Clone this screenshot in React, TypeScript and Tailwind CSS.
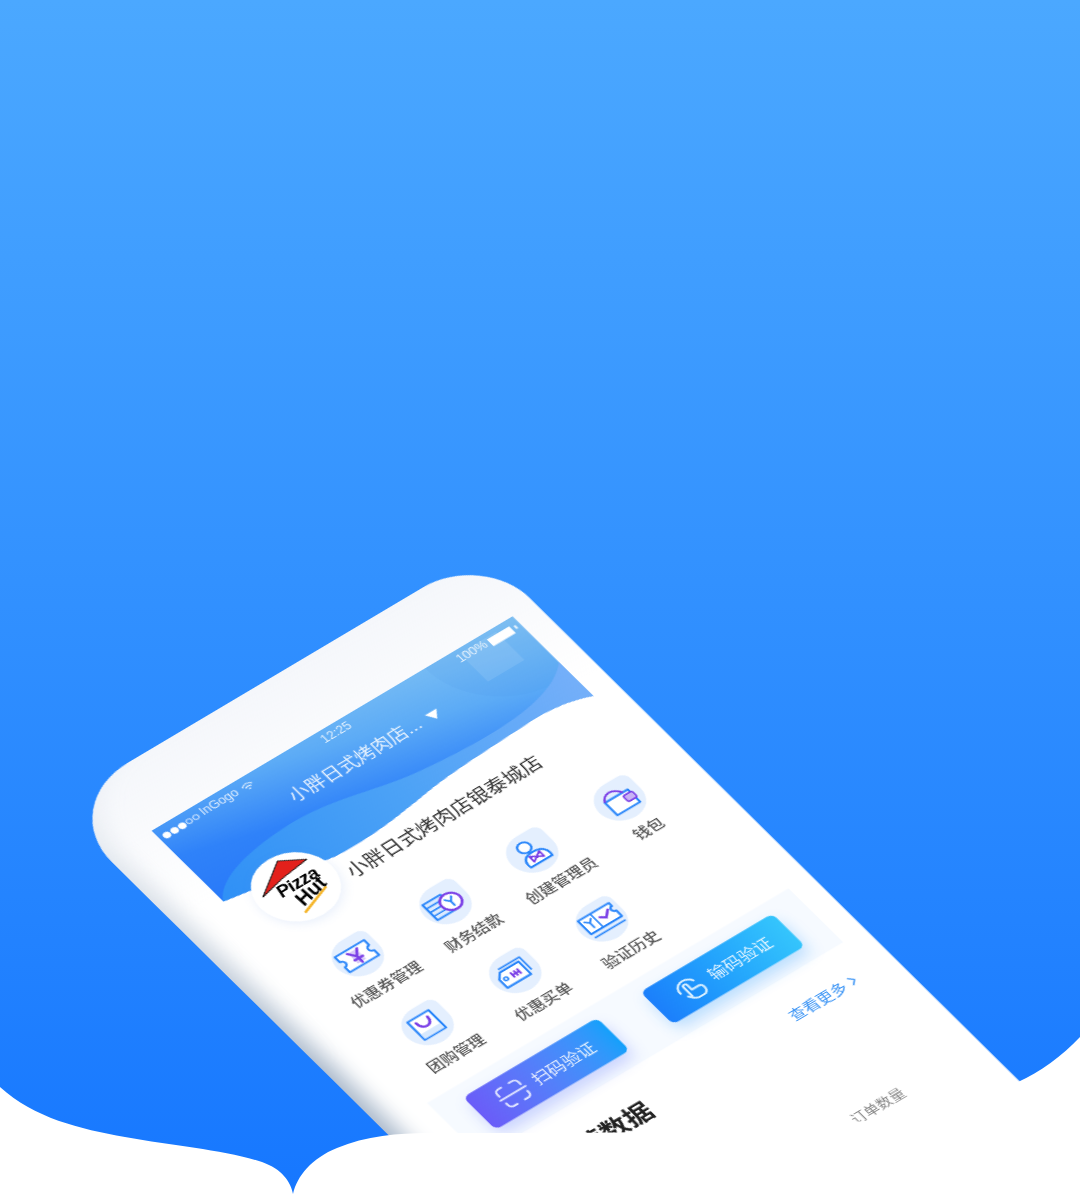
import React from 'react';
import { ChevronRight } from 'lucide-react';

const BLUE = '#2a86fa';
const PURPLE = '#7a3fe6';

const TicketIcon = () => (
  <svg width="42" height="32" viewBox="0 0 42 32" fill="none">
    <path d="M3 4h36v8a4 4 0 0 0 0 8v8H3v-8a4 4 0 0 0 0-8z" fill="#fff" stroke={BLUE} strokeWidth="2.4" strokeLinejoin="round" />
    <path d="M16 8h10v16H16z" fill="#d9ccf8" />
    <path d="M15 8l6 8 6-8M21 16v9M16 19h10" stroke={PURPLE} strokeWidth="2.8" strokeLinecap="round" />
  </svg>
);

const CoinsIcon = () => (
  <svg width="42" height="34" viewBox="0 0 42 34" fill="none">
    <path d="M3 5h22v24H3z" fill="#dbeafe" stroke={BLUE} strokeWidth="2.4" strokeLinejoin="round" />
    <path d="M3 11h22M3 17h22M3 23h22" stroke={BLUE} strokeWidth="1.8" />
    <circle cx="28" cy="18" r="11" fill="#fff" stroke={PURPLE} strokeWidth="2.6" />
    <path d="M24 13l4 5 4-5M28 18v6" stroke={BLUE} strokeWidth="2.2" strokeLinecap="round" />
  </svg>
);

const AdminIcon = () => (
  <svg width="36" height="36" viewBox="0 0 36 36" fill="none">
    <circle cx="15" cy="9" r="7" stroke={BLUE} strokeWidth="2.4" fill="#fff" />
    <path d="M5 33c-2-10 3-15 13-15s15 5 13 15z" fill="#fff" stroke={BLUE} strokeWidth="2.4" strokeLinejoin="round" />
    <path d="M12 21l6 4 6-4v8l-6-4-6 4z" stroke={PURPLE} strokeWidth="2" strokeLinejoin="round" />
  </svg>
);

const WalletIcon = () => (
  <svg width="36" height="34" viewBox="0 0 36 34" fill="none">
    <path d="M4 11h28v20H4z" fill="#fff" stroke={BLUE} strokeWidth="2.4" strokeLinejoin="round" />
    <path d="M4 11C7 5 11 3 15 3c4 0 8 3 11 8" stroke={PURPLE} strokeWidth="2.4" />
    <rect x="23" y="15" width="11" height="9" rx="2" fill="#c9b2f5" stroke={PURPLE} strokeWidth="1.8" />
  </svg>
);

const BagIcon = () => (
  <svg width="36" height="36" viewBox="0 0 36 36" fill="none">
    <path d="M5 4h26v28H5z" fill="#fff" stroke={BLUE} strokeWidth="2.4" strokeLinejoin="round" />
    <path d="M6 24h24v7H6z" fill="#d6e8fe" />
    <path d="M11 10c0 12 14 12 14 0" stroke={PURPLE} strokeWidth="3" strokeLinecap="round" />
  </svg>
);

const TagIcon = () => (
  <svg width="40" height="34" viewBox="0 0 40 34" fill="none">
    <path d="M10 4h26v20" stroke={BLUE} strokeWidth="1.8" />
    <path d="M9 8L3 15v13h29V8z" fill="#fff" stroke={BLUE} strokeWidth="2.4" strokeLinejoin="round" />
    <circle cx="9" cy="18" r="2.200" stroke={BLUE} strokeWidth="1.8" />
    <path d="M17 14v8M21 14v8M25 14v8M16 18h10" stroke={PURPLE} strokeWidth="2.2" />
  </svg>
);

const CheckTicketIcon = () => (
  <svg width="44" height="36" viewBox="0 0 44 36" fill="none">
    <path d="M3 4h38v5a3 3 0 0 0 0 7v9H3z" fill="#fff" stroke={BLUE} strokeWidth="2.4" strokeLinejoin="round" />
    <path d="M18 4v21" stroke={BLUE} strokeWidth="1.8" />
    <path d="M7 9l4 4 4-4M11 13v7" stroke={BLUE} strokeWidth="2" strokeLinecap="round" />
    <path d="M23 13l5 4 7-7" stroke={PURPLE} strokeWidth="2.8" strokeLinecap="round" />
    <path d="M3 31h38" stroke={BLUE} strokeWidth="1.8" />
  </svg>
);

const ScanIcon = () => (
  <svg width="30" height="30" viewBox="0 0 30 30" fill="none" stroke="#dfe4ff" strokeWidth="2" strokeLinecap="round">
    <path d="M4 11V8a4 4 0 0 1 4-4h3M19 4h3a4 4 0 0 1 4 4v3M26 20v2a4 4 0 0 1-4 4h-3M11 26H8a4 4 0 0 1-4-4v-2M2 15h26" />
  </svg>
);

const TapIcon = () => (
  <svg width="30" height="30" viewBox="0 0 30 30" fill="none" stroke="#d8efff" strokeWidth="2" strokeLinecap="round" strokeLinejoin="round">
    <path d="M6 15a9 9 0 0 1 17-5" />
    <path d="M12 23V11a2 2 0 0 1 4 0v6h7a3 3 0 0 1 3 3v2a5 5 0 0 1-5 5h-5c-2 0-3-1-4-2l-3-4" />
  </svg>
);

const entries = [
  { label: '优惠券管理', icon: <TicketIcon /> },
  { label: '财务结款', icon: <CoinsIcon /> },
  { label: '创建管理员', icon: <AdminIcon /> },
  { label: '钱包', icon: <WalletIcon /> },
  { label: '团购管理', icon: <BagIcon /> },
  { label: '优惠买单', icon: <TagIcon /> },
  { label: '验证历史', icon: <CheckTicketIcon /> },
];

const HeaderArt = () => (
  <svg className="absolute left-0 top-0" width="375" height="116" viewBox="0 0 375 116" fill="none">
    <defs>
      <linearGradient id="headBase" x1="0" y1="1" x2="1" y2="0">
        <stop offset="0" stopColor="#2676f9" />
        <stop offset="0.35" stopColor="#2f82f9" />
        <stop offset="0.65" stopColor="#5cabf6" />
        <stop offset="1" stopColor="#82c3f3" />
      </linearGradient>
      <linearGradient id="headWave" x1="0" y1="0" x2="1" y2="0">
        <stop offset="0" stopColor="#2f90f6" />
        <stop offset="0.5" stopColor="#4ca2f6" />
        <stop offset="1" stopColor="#74aff9" />
      </linearGradient>
      <clipPath id="headClip">
        <path d="M0 0H375V108C360 101 340 97 317 98C280 100 240 100 202 106C165 112 135 116 103 114L0 96Z" />
      </clipPath>
    </defs>
    <g clipPath="url(#headClip)">
      <rect width="375" height="116" fill="url(#headBase)" />
      <circle cx="362" cy="0" r="78" fill="#3c82dc" fillOpacity="0.07" />
      <rect x="316" y="5" width="38" height="38" fill="#fff" fillOpacity="0.1" />
      <path d="M0 96C10 78 40 66 90 64C140 62 170 80 220 85C270 90 345 95 375 62V116H0Z" fill="url(#headWave)" />
    </g>
  </svg>
);

const LogoBadge = () => (
  <div className="relative mt-[5px] h-[74px] w-[74px] shrink-0 rounded-full bg-white shadow-[0_3px_10px_rgba(90,140,230,0.14)]">
    <svg className="absolute left-0 top-0" width="74" height="74" viewBox="-37 -37 74 74" fill="none">
      <path d="M-28 -8L5 -31L25 -18L-3 -14Z" fill="#e3201b" stroke="#111" strokeWidth="0.9" strokeLinejoin="round" />
      <path d="M-10 26L19 15" stroke="#f5b52a" strokeWidth="2.4" strokeLinecap="round" />
    </svg>
    <span className="absolute left-[21px] top-[23px] text-[17px] font-bold italic leading-[24px] tracking-[-0.6px] text-black">
      Pizza
    </span>
    <span className="absolute left-[28px] top-[36px] text-[19px] font-bold italic leading-[24px] text-black [transform:rotate(-14deg)]">
      Hut
    </span>
  </div>
);

const App: React.FC = () => {
  return (
    <div className="relative h-[1194px] w-[1080px] overflow-hidden bg-gradient-to-b from-[#4ba8ff] to-[#1677ff] font-['Liberation_Sans','Noto_Sans_CJK_SC',sans-serif]">
      {/* phone mockup, laid out flat and then skewed onto the canvas */}
      <div className="absolute left-0 top-0 h-[800px] w-[444px] origin-top-left rounded-[76px_62px_60px_60px] bg-gradient-to-b from-[#f5f7fb] to-white to-[20%] pl-[46px] pt-[69px] blur-[0.5px] [transform:matrix(0.9637,-0.5725,0.75,0.74,55,806)]">
        <div className="absolute inset-0 rounded-[76px_62px_60px_60px] shadow-[inset_24px_0_20px_-14px_#a9b8ca] [mask-image:linear-gradient(to_bottom,rgba(0,0,0,0.1),black_45%)]" />
        <div className="relative w-[375px]">
          <HeaderArt />
          <div className="relative flex h-[22px] items-center justify-between pl-[4px] text-[11.5px] text-white/80">
            <div className="flex items-center gap-[1px]">
              <span className="h-[7px] w-[7px] rounded-full bg-white" />
              <span className="h-[7px] w-[7px] rounded-full bg-white" />
              <span className="h-[7px] w-[7px] rounded-full bg-white" />
              <span className="h-[6px] w-[6px] rounded-full border border-white/70" />
              <span className="h-[6px] w-[6px] rounded-full border border-white/70" />
              <span className="ml-[2px]">InGogo</span>
              <svg className="ml-[3px]" width="12" height="9" viewBox="0 0 12 9" fill="none" stroke="#fff" strokeOpacity="0.85" strokeWidth="1.2">
                <path d="M1 3c3-3 7-3 10 0M3 5c2-1.600 4-1.600 6 0M5 7c.7-.5 1.300-.5 2 0" />
              </svg>
            </div>
            <span className="absolute left-[170px]">12:25</span>
            <div className="flex items-center gap-[3px] pr-[4px]">
              <span>100%</span>
              <span className="h-[9px] w-[23px] bg-white" />
              <span className="h-[4px] w-[2px] bg-white/80" />
            </div>
          </div>
          <div className="relative flex h-[44px] items-center pl-[112px] text-[17px] text-white/85">
            <span>小胖日式烤肉店...</span>
            <span className="ml-[8px] h-0 w-0 border-x-[6px] border-t-[9px] border-x-transparent border-t-white" />
          </div>
          <div className="relative mt-[12px] flex h-[84px] pl-[20px]">
            <LogoBadge />
            <span className="ml-[6px] mt-[48px] text-[18px] leading-[20px] text-[#333]">小胖日式烤肉店银泰城店</span>
          </div>
          <div className="mt-[24px] grid grid-cols-4 gap-y-[21px] px-[6px]">
            {entries.map((entry) => (
              <div key={entry.label} className="flex h-[72px] flex-col items-center">
                <div className="flex h-[46px] w-[46px] items-center justify-center">
                  <div className="relative flex h-[43px] w-[43px] items-center justify-center rounded-[50%_18%_50%_50%] bg-[#e4effe]">
                    <div className="shrink-0 scale-[0.84]">{entry.icon}</div>
                  </div>
                </div>
                <span className="mt-[6px] whitespace-nowrap text-[14px] font-medium leading-[20px] text-[#555]">{entry.label}</span>
              </div>
            ))}
          </div>
          <div className="mt-[17px] flex justify-between bg-[#f6faff] px-[27px] pb-[16px] pt-[13px]">
            <button className="flex h-[44px] w-[139px] items-center justify-center gap-[6px] rounded-[6px] bg-gradient-to-r from-[#6a5cf8] to-[#12a0fb] text-[15.5px] text-white/85 shadow-[0_8px_14px_rgba(90,110,250,0.28)]">
              <ScanIcon />
              扫码验证
            </button>
            <button className="flex h-[44px] w-[137px] items-center justify-center gap-[6px] rounded-[6px] bg-gradient-to-r from-[#1c7ffb] to-[#35c5fc] text-[15.5px] text-white/85 shadow-[0_8px_14px_rgba(40,150,250,0.28)]">
              <TapIcon />
              输码验证
            </button>
          </div>
          <div className="mt-[26px] flex items-start justify-between pl-[45px] pr-[11px]">
            <span className="text-[24px] font-bold leading-[34px] text-[#222]">经营数据</span>
            <span className="flex items-center text-[14px] leading-[22px] text-[#3d95f5]">
              查看更多
              <ChevronRight size={16} />
            </span>
          </div>
          <div className="mt-[12px] flex justify-between pl-[45px] pr-[59px]">
            <span className="text-[13px] leading-[18px] text-[#888]">今日营业额（元）</span>
            <div className="mt-[75px] flex flex-col items-start">
              <span className="text-[13px] leading-[18px] text-[#888]">订单数量</span>
              <span className="mt-[4px] text-[20px] font-bold leading-[26px] text-[#333]">128</span>
            </div>
          </div>
        </div>
      </div>
      {/* white wave that cuts off the bottom of the phone */}
      <svg className="absolute left-0 top-0" width="1080" height="1194" viewBox="0 0 1080 1194" fill="none">
        <path
          d="M0 1087C34 1118 80 1129 125 1137C175 1146 225 1150 262 1162C282 1169 291 1182 293 1194C297 1176 312 1158 337 1148C365 1136 400 1133 427 1133C520 1133 640 1133 700 1131C780 1129 840 1125 885 1118C935 1110 975 1100 1018 1082C1040 1072 1062 1056 1080 1037V1194H0Z"
          fill="#fff"
        />
      </svg>
    </div>
  );
};

export default App;
